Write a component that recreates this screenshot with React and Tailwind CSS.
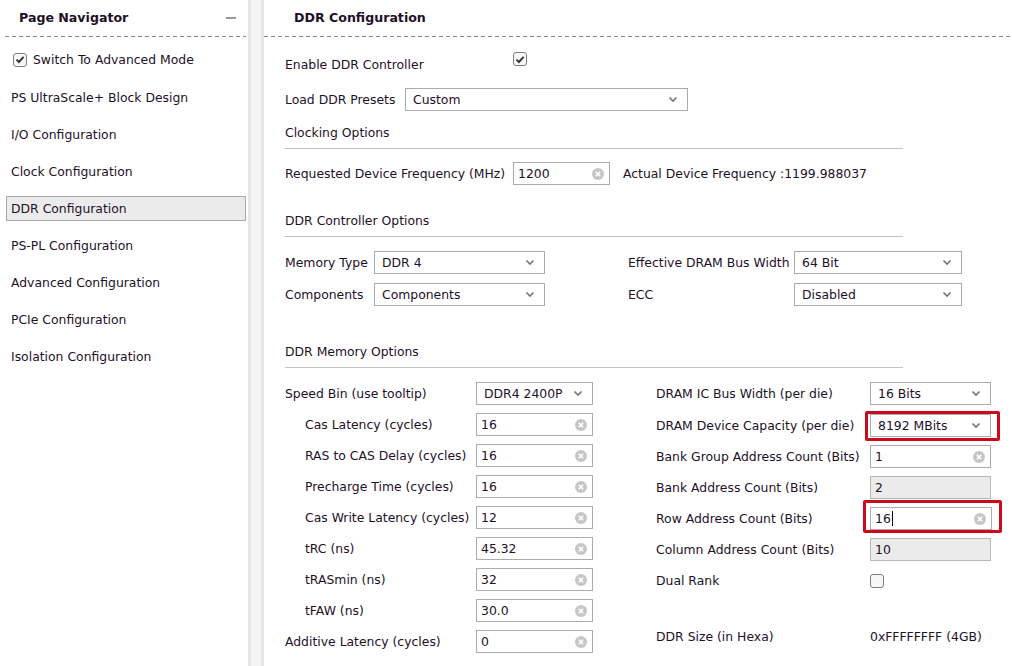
import React from "react";

const ink = "text-[#1e1029]";

const Chevron = () => (
  <svg width="10" height="7" viewBox="0 0 10 7" className="shrink-0">
    <path d="M1.5 1.5l3.5 3.5 3.5-3.5" fill="none" stroke="#777" strokeWidth="1.7" />
  </svg>
);

const ClearIcon = () => (
  <svg width="12" height="12" viewBox="0 0 12 12" className="shrink-0">
    <circle cx="6" cy="6" r="6" fill="#c6c6c6" />
    <path d="M3.8 3.8l4.4 4.4M8.2 3.8l-4.4 4.4" stroke="#fff" strokeWidth="1.6" />
  </svg>
);

const Check = ({ checked }) => (
  <div className="w-[14px] h-[14px] rounded-[3px] border border-[#7e7e7e] bg-[#f7f7f7] flex items-center justify-center shrink-0">
    {checked && (
      <svg width="10" height="9" viewBox="0 0 10 9">
        <path d="M1.5 4.6l2.4 2.4L8.6 1.8" fill="none" stroke="#333" strokeWidth="1.9" />
      </svg>
    )}
  </div>
);

const Select = ({ value, className = "" }) => (
  <div
    className={`flex items-center justify-between h-[23px] border border-[#ababab] bg-white pl-[7px] pr-[9px] ${className}`}
  >
    <span className={`pt-px ${ink}`}>{value}</span>
    <Chevron />
  </div>
);

const Field = ({ value, className = "", disabled, focused }) => (
  <div
    className={`flex items-center justify-between h-[23px] border pl-[4px] pr-[5px] ${
      disabled ? "bg-[#ebebeb] border-[#b8b8b8]" : "bg-white border-[#ababab]"
    } ${focused ? "border-[#4a72d0]" : ""} ${className}`}
  >
    <span className={`${ink} pt-px flex items-center`}>
      {value}
      {focused && <span className="inline-block w-px h-[15px] bg-black ml-px" />}
    </span>
    {!disabled && <ClearIcon />}
  </div>
);

const Dashed = () => (
  <div className="h-px w-full bg-[repeating-linear-gradient(90deg,#8a8a8a_0_4px,transparent_4px_7px)]" />
);

const SectionTitle = ({ children, className = "" }) => (
  <div className={`w-[618px] border-b border-[#c4c4c4] pt-px pb-[7px] leading-[16px] ${ink} ${className}`}>
    {children}
  </div>
);

const navItems = [
  "PS UltraScale+ Block Design",
  "I/O Configuration",
  "Clock Configuration",
  "DDR Configuration",
  "PS-PL Configuration",
  "Advanced Configuration",
  "PCIe Configuration",
  "Isolation Configuration",
];

const leftRows = [
  { label: "Speed Bin (use tooltip)", select: "DDR4 2400P" },
  { label: "Cas Latency (cycles)", value: "16", indent: true },
  { label: "RAS to CAS Delay (cycles)", value: "16", indent: true },
  { label: "Precharge Time (cycles)", value: "16", indent: true },
  { label: "Cas Write Latency (cycles)", value: "12", indent: true },
  { label: "tRC (ns)", value: "45.32", indent: true },
  { label: "tRASmin (ns)", value: "32", indent: true },
  { label: "tFAW (ns)", value: "30.0", indent: true },
  { label: "Additive Latency (cycles)", value: "0" },
];

export default function App() {
  return (
    <div className="flex h-[666px] w-[1012px] overflow-hidden bg-white font-['DejaVu_Sans',sans-serif] text-[12.4px]">
      {/* Page navigator */}
      <aside className="w-[248px] shrink-0 flex flex-col">
        <div className="h-[36px] flex items-center justify-between pl-[19px] pr-[12px]">
          <span className={`font-bold text-[12.6px] ${ink}`}>Page Navigator</span>
          <span className="w-[10px] h-[2px] bg-[#9a9a9a]" />
        </div>
        <div className="pl-[5px] pr-[2px]">
          <Dashed />
        </div>
        <div className="flex flex-col gap-[12px] mt-[10px] pl-[6px] pr-[2px]">
          <div className="h-[25px] flex items-center gap-[6px] pl-[7px]">
            <Check checked />
            <span className={`pt-[2px] ${ink}`}>Switch To Advanced Mode</span>
          </div>
          {navItems.map((item, i) => (
            <div
              key={item}
              className={`h-[25px] flex items-center pl-[4px] pt-px ${i === 0 ? "mt-px" : ""} ${
                item === "DDR Configuration" ? "bg-[#ebebeb] border border-[#a9a9a9]" : "border border-transparent"
              }`}
            >
              <span className={ink}>{item}</span>
            </div>
          ))}
        </div>
      </aside>

      {/* splitter */}
      <div className="w-[16px] shrink-0 bg-[#f4f4f4] border-l-[3px] border-r-[3px] border-[#e6e6e6]" />

      {/* DDR configuration */}
      <main className="flex-1 flex flex-col">
        <div className="h-[36px] flex items-center pl-[30px] pt-px">
          <span className={`font-bold text-[12.6px] ${ink}`}>DDR Configuration</span>
        </div>
        <Dashed />

        <div className="flex flex-col pl-[21px]">
          <div className="flex items-start h-[22px] mt-[17px]">
            <span className={`w-[228px] leading-[22px] ${ink}`}>Enable DDR Controller</span>
            <div className="-mt-[2px]">
              <Check checked />
            </div>
          </div>

          <div className="flex items-center h-[23px] mt-[12px]">
            <span className={`w-[120px] pt-[2px] ${ink}`}>Load DDR Presets</span>
            <Select value="Custom" className="w-[283px]" />
          </div>

          <SectionTitle className="mt-[13px]">Clocking Options</SectionTitle>

          <div className="flex items-center h-[23px] mt-[13px]">
            <span className={`w-[228px] pt-px ${ink}`}>Requested Device Frequency (MHz)</span>
            <Field value="1200" className="w-[97px]" />
            <span className={`ml-[13px] pt-px ${ink}`}>Actual Device Frequency :1199.988037</span>
          </div>

          <SectionTitle className="mt-[27px]">DDR Controller Options</SectionTitle>

          <div className="flex flex-col gap-[9px] mt-[14px]">
            {[
              ["Memory Type", "DDR 4", "Effective DRAM Bus Width", "64 Bit"],
              ["Components", "Components", "ECC", "Disabled"],
            ].map(([l1, v1, l2, v2]) => (
              <div key={l1} className="flex items-center h-[23px]">
                <span className={`w-[89px] pt-[2px] ${ink}`}>{l1}</span>
                <Select value={v1} className="w-[171px]" />
                <span className={`ml-[83px] w-[166px] pt-[2px] ${ink}`}>{l2}</span>
                <Select value={v2} className="w-[168px]" />
              </div>
            ))}
          </div>

          <SectionTitle className="mt-[37px]">DDR Memory Options</SectionTitle>

          <div className="flex mt-[14px]">
            <div className="w-[371px] flex flex-col gap-[8px]">
              {leftRows.map((r) => (
                <div key={r.label} className="flex items-center h-[23px]">
                  <span className={`w-[191px] pt-[2px] ${r.indent ? "pl-[20px]" : ""} ${ink}`}>{r.label}</span>
                  {r.select ? (
                    <Select value={r.select} className="w-[117px]" />
                  ) : (
                    <Field value={r.value} className="w-[117px]" />
                  )}
                </div>
              ))}
            </div>

            <div className="flex flex-col gap-[8px]">
              <div className="flex items-center h-[23px]">
                <span className={`w-[214px] pt-[2px] ${ink}`}>DRAM IC Bus Width (per die)</span>
                <Select value="16 Bits" className="w-[121px]" />
              </div>
              <div className="flex items-center h-[23px] mt-px">
                <span className={`w-[214px] pt-[2px] ${ink}`}>DRAM Device Capacity (per die)</span>
                <div className="relative">
                  <Select value="8192 MBits" className="w-[121px]" />
                  <div className="absolute -left-[5px] -right-[9px] -top-[3px] -bottom-[4px] border-[3px] border-[#cc0a1e] rounded-[2px]" />
                </div>
              </div>
              <div className="flex items-center h-[23px]">
                <span className={`w-[214px] pt-[2px] ${ink}`}>Bank Group Address Count (Bits)</span>
                <Field value="1" className="w-[121px]" />
              </div>
              <div className="flex items-center h-[23px]">
                <span className={`w-[214px] pt-[2px] ${ink}`}>Bank Address Count (Bits)</span>
                <Field value="2" disabled className="w-[121px]" />
              </div>
              <div className="flex items-center h-[23px]">
                <span className={`w-[214px] pt-[2px] ${ink}`}>Row Address Count (Bits)</span>
                <div className="relative">
                  <Field value="16" focused className="w-[122px]" />
                  <div className="absolute -left-[7px] -right-[10px] -top-[7px] -bottom-[3px] border-[3px] border-[#cc0a1e] rounded-[2px]" />
                </div>
              </div>
              <div className="flex items-center h-[23px]">
                <span className={`w-[214px] pt-[2px] ${ink}`}>Column Address Count (Bits)</span>
                <Field value="10" disabled className="w-[121px]" />
              </div>
              <div className="flex items-center h-[23px]">
                <span className={`w-[214px] pt-[2px] ${ink}`}>Dual Rank</span>
                <Check />
              </div>
              <div className="flex items-center h-[23px] mt-[25px]">
                <span className={`w-[214px] pt-[2px] ${ink}`}>DDR Size (in Hexa)</span>
                <span className={`pt-[2px] ${ink}`}>0xFFFFFFFF (4GB)</span>
              </div>
            </div>
          </div>
        </div>
      </main>
    </div>
  );
}
